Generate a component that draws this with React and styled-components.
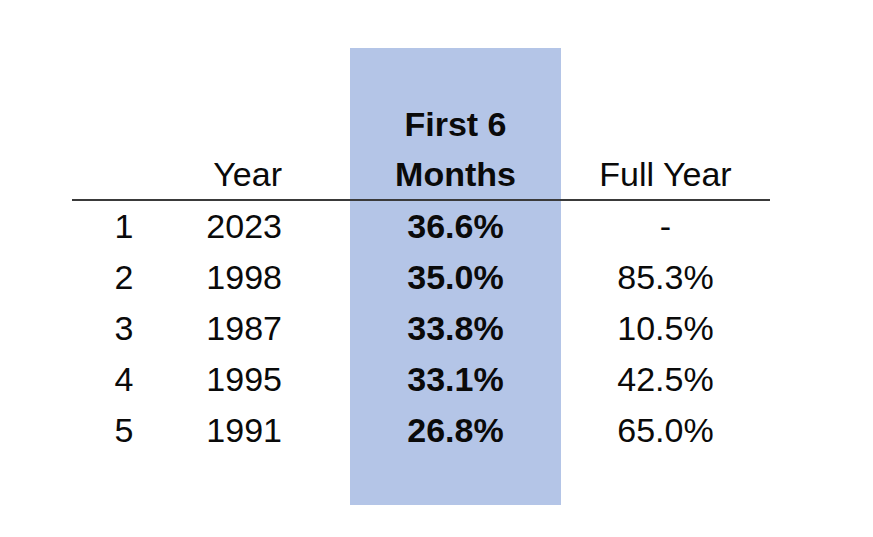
import React from "react";
import styled, { createGlobalStyle } from "styled-components";

const Global = createGlobalStyle`
  html, body { margin: 0; padding: 0; background: #ffffff; }
  body { font-family: "Liberation Sans", Arial, sans-serif; color: #0a0a0a; }
`;

const Page = styled.div`
  width: 873px;
  height: 537px;
  padding: 48px 0 0 72px;
  box-sizing: border-box;
  background: #ffffff;
`;

const Table = styled.div`
  display: grid;
  grid-template-columns: 104px 174px 211px 209px;
  grid-template-rows: 151px 2px repeat(5, 51px) 49px;
  font-size: 34px;
  line-height: 50px;
`;

const Cell = styled.div`
  display: flex;
  flex-direction: column;
  justify-content: ${(p) => (p.$head ? "flex-end" : "center")};
  align-items: ${(p) =>
    p.$align === "right" ? "flex-end" : "center"};
  padding-right: ${(p) => (p.$align === "right" ? "68px" : "0")};
  background: ${(p) => (p.$hl ? "#b4c5e7" : "transparent")};
  font-weight: ${(p) => (p.$bold ? 700 : 400)};
  line-height: ${(p) => (p.$head ? "50px" : "51px")};
  white-space: nowrap;
`;

const Rule = styled.div`
  grid-column: 1 / -1;
  background: #3a3a3a;
`;

const rows = [
  ["1", "2023", "36.6%", "-"],
  ["2", "1998", "35.0%", "85.3%"],
  ["3", "1987", "33.8%", "10.5%"],
  ["4", "1995", "33.1%", "42.5%"],
  ["5", "1991", "26.8%", "65.0%"],
];

export default function App() {
  return (
    <>
      <Global />
      <Page>
        <Table>
          <Cell $head />
          <Cell $head $align="right">Year</Cell>
          <Cell $head $hl $bold>
            <span>First 6</span>
            <span>Months</span>
          </Cell>
          <Cell $head>Full Year</Cell>
          <Rule />
          {rows.map((r) => (
            <React.Fragment key={r[0]}>
              <Cell>{r[0]}</Cell>
              <Cell $align="right">{r[1]}</Cell>
              <Cell $hl $bold>{r[2]}</Cell>
              <Cell>{r[3]}</Cell>
            </React.Fragment>
          ))}
          <Cell />
          <Cell />
          <Cell $hl />
          <Cell />
        </Table>
      </Page>
    </>
  );
}
